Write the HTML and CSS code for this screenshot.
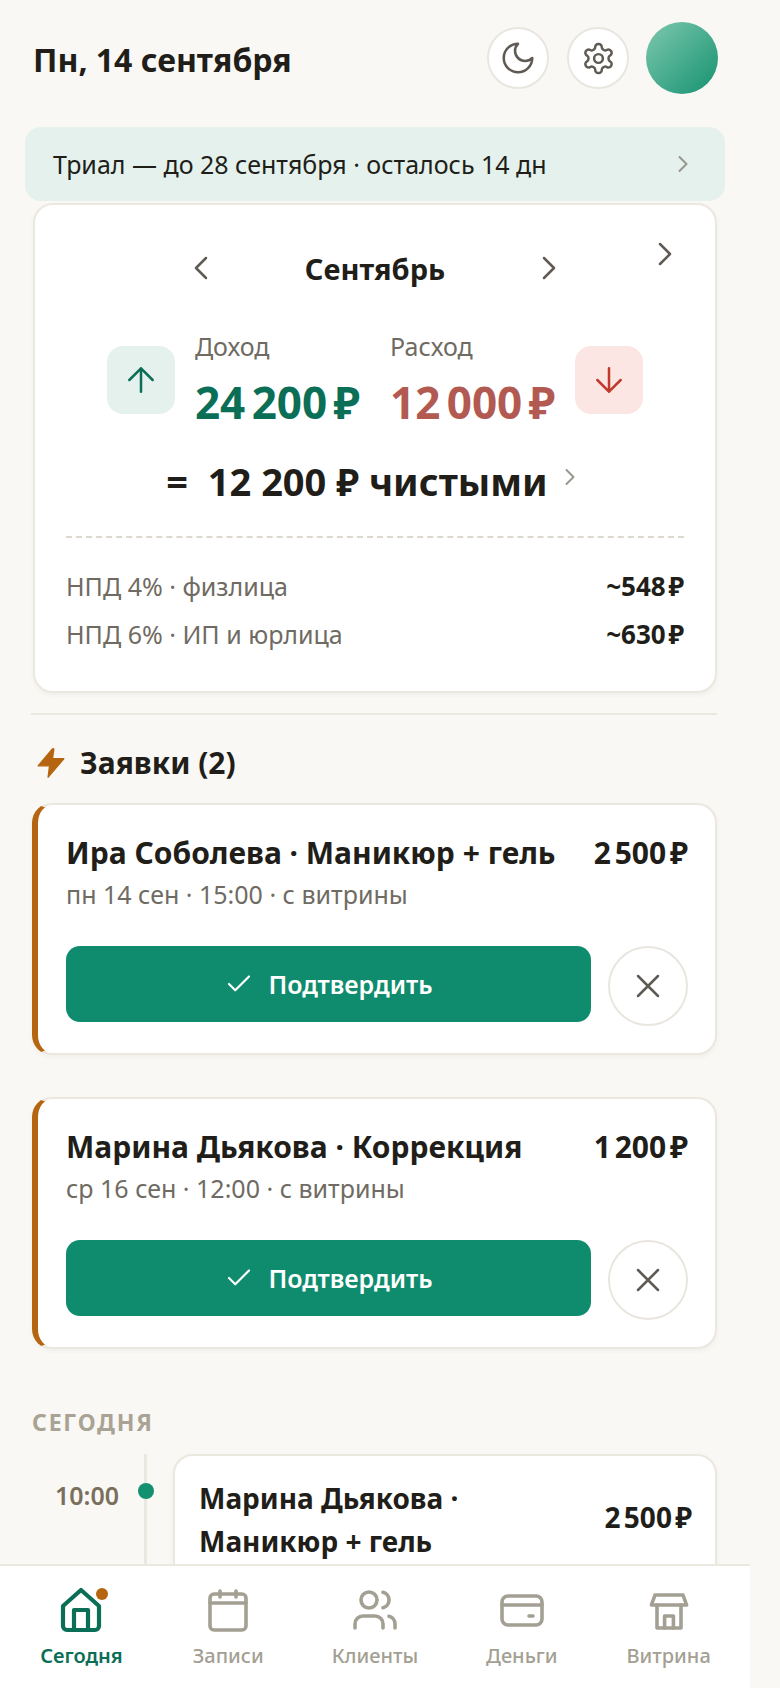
FILE: index.html
```html
<!DOCTYPE html>
<html lang="ru">
<head>
<meta charset="utf-8">
<title>Сегодня</title>
<link rel="stylesheet" href="styles.css">
</head>
<body>
<div class="app">
  <main class="main">
    <header class="top">
      <h1 class="date">Пн, 14 сентября</h1>
      <div class="top-actions">
        <button class="round">
          <svg class="ic-moon" viewBox="0 0 24 24"><path d="M12 3a6 6 0 0 0 9 9 9 9 0 1 1-9-9Z"/></svg>
        </button>
        <button class="round">
          <svg class="ic-gear" viewBox="0 0 24 24"><path d="M12.22 2h-.44a2 2 0 0 0-2 2v.18a2 2 0 0 1-1 1.73l-.43.25a2 2 0 0 1-2 0l-.15-.08a2 2 0 0 0-2.73.73l-.22.38a2 2 0 0 0 .73 2.73l.15.1a2 2 0 0 1 1 1.72v.51a2 2 0 0 1-1 1.74l-.15.09a2 2 0 0 0-.73 2.73l.22.38a2 2 0 0 0 2.73.73l.15-.08a2 2 0 0 1 2 0l.43.25a2 2 0 0 1 1 1.73V20a2 2 0 0 0 2 2h.44a2 2 0 0 0 2-2v-.18a2 2 0 0 1 1-1.73l.43-.25a2 2 0 0 1 2 0l.15.08a2 2 0 0 0 2.73-.73l.22-.39a2 2 0 0 0-.73-2.73l-.15-.08a2 2 0 0 1-1-1.74v-.5a2 2 0 0 1 1-1.74l.15-.09a2 2 0 0 0 .73-2.73l-.22-.38a2 2 0 0 0-2.73-.73l-.15.08a2 2 0 0 1-2 0l-.43-.25a2 2 0 0 1-1-1.73V4a2 2 0 0 0-2-2Z"/><circle cx="12" cy="12" r="3"/></svg>
        </button>
        <div class="avatar"></div>
      </div>
    </header>

    <div class="trial">
      <span>Триал — до 28 сентября · осталось 14 дн</span>
      <svg class="chev-s" viewBox="0 0 24 24"><path d="m9 18 6-6-6-6"/></svg>
    </div>

    <section class="summary card">
      <svg class="chev corner" viewBox="0 0 24 24"><path d="m9 18 6-6-6-6"/></svg>
      <div class="month">
        <svg class="chev" viewBox="0 0 24 24"><path d="m15 18-6-6 6-6"/></svg>
        <span class="month-name">Сентябрь</span>
        <svg class="chev" viewBox="0 0 24 24"><path d="m9 18 6-6-6-6"/></svg>
      </div>
      <div class="flow">
        <div class="tile tile-in"><svg viewBox="0 0 24 24"><path d="m5 12 7-7 7 7M12 19V5"/></svg></div>
        <div class="stat">
          <div class="stat-label">Доход</div>
          <div class="stat-val in">24 200 ₽</div>
        </div>
        <div class="stat">
          <div class="stat-label">Расход</div>
          <div class="stat-val out">12 000 ₽</div>
        </div>
        <div class="tile tile-out"><svg viewBox="0 0 24 24"><path d="M12 5v14M19 12l-7 7-7-7"/></svg></div>
      </div>
      <div class="net">
        <span>=&nbsp; 12 200 ₽ чистыми</span>
        <svg class="chev-s" viewBox="0 0 24 24"><path d="m9 18 6-6-6-6"/></svg>
      </div>
      <div class="taxes">
        <div class="tax"><span>НПД 4% · физлица</span><b>~548 ₽</b></div>
        <div class="tax"><span>НПД 6% · ИП и юрлица</span><b>~630 ₽</b></div>
      </div>
    </section>

    <hr class="rule">

    <div class="req-head">
      <svg class="bolt" viewBox="0 0 24 24"><path d="M13 2 3 14h8l-1 8 11-13h-8l1-7Z"/></svg>
      <span>Заявки (2)</span>
    </div>

    <article class="req card">
      <div class="req-top"><span class="req-name">Ира Соболева · Маникюр + гель</span><span class="req-price">2 500 ₽</span></div>
      <div class="req-sub">пн 14 сен · 15:00 · с витрины</div>
      <div class="req-actions">
        <button class="confirm"><svg viewBox="0 0 24 24"><path d="M20 6 9 17l-5-5"/></svg>Подтвердить</button>
        <button class="reject"><svg viewBox="0 0 24 24"><path d="M18 6 6 18M6 6l12 12"/></svg></button>
      </div>
    </article>

    <article class="req card">
      <div class="req-top"><span class="req-name">Марина Дьякова · Коррекция</span><span class="req-price">1 200 ₽</span></div>
      <div class="req-sub">ср 16 сен · 12:00 · с витрины</div>
      <div class="req-actions">
        <button class="confirm"><svg viewBox="0 0 24 24"><path d="M20 6 9 17l-5-5"/></svg>Подтвердить</button>
        <button class="reject"><svg viewBox="0 0 24 24"><path d="M18 6 6 18M6 6l12 12"/></svg></button>
      </div>
    </article>

    <h2 class="section">СЕГОДНЯ</h2>

    <div class="timeline">
      <div class="time">10:00</div>
      <div class="rail"><span class="dot"></span></div>
      <article class="appt card">
        <div class="appt-name">Марина Дьякова · Маникюр + гель</div>
        <div class="appt-price">2 500 ₽</div>
      </article>
    </div>
  </main>

  <nav class="tabs">
    <div class="tab active">
      <span class="tab-ic">
        <svg viewBox="0 0 24 24"><path d="M3 10 12 2l9 8v10a2 2 0 0 1-2 2H5a2 2 0 0 1-2-2Z"/><path d="M8.5 22V12h7v10"/></svg>
        <span class="badge"></span>
      </span>
      <span>Сегодня</span>
    </div>
    <div class="tab">
      <span class="tab-ic"><svg viewBox="0 0 24 24"><path d="M8 2.5v3M16 2.5v3"/><rect x="3" y="4" width="18" height="18" rx="2"/><path d="M3 8.5h18"/></svg></span>
      <span>Записи</span>
    </div>
    <div class="tab">
      <span class="tab-ic"><svg viewBox="0 0 24 24"><path d="M16 21v-2a4 4 0 0 0-4-4H6a4 4 0 0 0-4 4v2"/><circle cx="9" cy="7" r="4"/><path d="M22 21v-2a4 4 0 0 0-3-3.87M16 3.13a4 4 0 0 1 0 7.75"/></svg></span>
      <span>Клиенты</span>
    </div>
    <div class="tab">
      <span class="tab-ic"><svg viewBox="0 0 24 24"><rect x="2" y="5" width="20" height="14.5" rx="3"/><path d="M2 9.5h20M15.5 15h2"/></svg></span>
      <span>Деньги</span>
    </div>
    <div class="tab">
      <span class="tab-ic"><svg viewBox="0 0 24 24"><path d="M5 4.5h14l1.8 5H3.2Z"/><path d="M6 9.5V21h12V9.5"/><path d="M9.8 21v-6h4.4v6"/></svg></span>
      <span>Витрина</span>
    </div>
  </nav>
</div>
</body>
</html>
```
FILE: styles.css
```css
* { box-sizing: border-box; }
html, body { margin: 0; height: 100%; }
body {
  background: #faf8f5;
  color: #211e1a;
  font-family: "Noto Sans", "Open Sans", sans-serif;
  overflow: hidden;
}
svg { fill: none; stroke: currentColor; stroke-width: 2; stroke-linecap: round; stroke-linejoin: round; display: block; }
button { font: inherit; cursor: pointer; }

.app { width: 750px; height: 1688px; display: flex; flex-direction: column; }
.main { flex: 1; min-height: 0; overflow: hidden; padding: 22px 33px 0; }

.top { height: 72px; display: flex; align-items: center; justify-content: space-between; margin-right: -1px; }
.date { margin: 4px 0 0; font-size: 32px; font-weight: 700; line-height: 42px; }
.top-actions { display: flex; align-items: center; gap: 18px; }
.round {
  width: 62px; height: 62px; border-radius: 50%; padding: 0;
  background: #fff; border: 2px solid #e9e6e0; color: #5f5b54;
  display: flex; align-items: center; justify-content: center;
}
.ic-moon { width: 38px; height: 38px; stroke-width: 1.6; }
.ic-gear { width: 35px; height: 35px; stroke-width: 1.7; }
.avatar { width: 72px; height: 72px; border-radius: 50%; background: linear-gradient(135deg, #7ec8ae, #159270); margin-left: -1px; }

.trial {
  margin: 33px -8px 2px; height: 74px; padding: 0 28px 0 28px;
  background: #e4f1ec; border-radius: 16px;
  display: flex; align-items: center; justify-content: space-between;
  font-size: 25px; line-height: 32px;
}
.chev-s { width: 28px; height: 28px; color: #98968e; stroke-width: 1.7; }

.card { background: #fff; border: 2px solid #ebe8df; border-radius: 20px; box-shadow: 0 2px 4px rgba(60,50,30,.05); }

.summary { position: relative; height: 490px; padding: 0 31px; }
.corner { position: absolute; top: 29px; right: 30px; }
.chev { width: 40px; height: 40px; color: #5f5b54; stroke-width: 1.5; flex: none; }
.month { height: 48px; margin-top: 39px; display: flex; align-items: center; justify-content: center; gap: 65px; }
.month-name { font-size: 29px; font-weight: 700; width: 178px; text-align: center; }

.flow { margin-top: 44px; display: flex; align-items: flex-start; justify-content: center; gap: 30px; }
.tile { width: 68px; height: 68px; border-radius: 16px; flex: none; margin-top: 10px; display: flex; align-items: center; justify-content: center; }
.tile svg { width: 40px; height: 40px; stroke-width: 1.5; }
.tile-in { background: #e4f1ec; color: #0b6e56; margin-right: -10px; }
.tile-out { background: #fbe6e3; color: #c0392b; margin-left: -10px; }
.stat-label { font-size: 25px; line-height: 32px; color: #6f6b63; margin-top: -6px; }
.stat-val { font-size: 44px; font-weight: 700; line-height: 54px; margin-top: 13px; white-space: nowrap; word-spacing: -5px; }
.in { color: #0b6e56; }
.out { color: #b25a52; }

.net { display: flex; align-items: flex-start; justify-content: center; gap: 8px; margin-top: 26px; font-size: 38px; font-weight: 700; line-height: 52px; padding-bottom: 29px; }
.net .chev-s { margin-top: 8px; }

.taxes { border-top: 2px dashed #dcd8cd; padding-top: 24px; }
.tax { display: flex; justify-content: space-between; font-size: 25px; line-height: 48px; color: #6f6b63; }
.tax b { color: #211e1a; font-weight: 700; font-size: 26px; word-spacing: -4px; }

.rule { margin: 20px 0 0 -2px; border: 0; height: 2px; background: #ebe8df; }

.req-head { margin: 28px 0 0 1px; display: flex; align-items: center; gap: 12px; font-size: 30px; font-weight: 700; line-height: 40px; }
.bolt { width: 34px; height: 34px; fill: #b5650f; stroke: #b5650f; stroke-width: 1; }

.req { margin: 20px 0 42px -1px; height: 252px; border-left: 6px solid #b5650f; padding: 28px 27px 0 28px; }
.req-top { display: flex; justify-content: space-between; font-size: 30px; font-weight: 700; line-height: 40px; }
.req-price { word-spacing: -4px; }
.req-sub { font-size: 25px; line-height: 32px; color: #6f6b63; margin-top: 5px; }
.req-actions { margin-top: 36px; display: flex; gap: 17px; align-items: flex-start; }
.confirm {
  flex: 1; height: 76px; border: 0; border-radius: 14px; background: #0e8c6d; color: #fff;
  display: flex; align-items: center; justify-content: center; gap: 14px;
  font-size: 25px; font-weight: 600;
}
.confirm svg { width: 30px; height: 30px; stroke-width: 1.7; }
.reject {
  width: 80px; height: 80px; flex: none; padding: 0; border-radius: 50%;
  background: #fff; border: 2px solid #e9e6e0; color: #5f5b54;
  display: flex; align-items: center; justify-content: center;
}
.reject svg { width: 40px; height: 40px; stroke-width: 1.5; }

.section { margin: 58px 0 0 -1px; font-size: 23px; font-weight: 700; line-height: 30px; letter-spacing: 1.8px; color: #a8a394; }

.timeline { margin-top: 17px; display: flex; height: 300px; }
.time { width: 86px; font-size: 25px; font-weight: 600; color: #7a6f5d; line-height: 34px; margin-top: 24px; text-align: right; }
.rail { position: relative; width: 54px; }
.rail::before { content: ""; position: absolute; left: 25px; top: 0; bottom: 0; width: 3px; background: #ebe8df; }
.dot { position: absolute; left: 19px; top: 29px; width: 16px; height: 16px; border-radius: 50%; background: #12906f; }
.appt { flex: 1; height: 300px; padding: 21px 23px 0 24px; display: flex; justify-content: space-between; }
.appt-name { width: 320px; font-size: 28px; font-weight: 700; line-height: 43px; }
.appt-price { font-size: 28px; font-weight: 700; line-height: 43px; margin-top: 19px; word-spacing: -4px; }

.tabs {
  height: 124px; flex: none; background: #fff; border-top: 2px solid #ebe8df;
  display: grid; grid-template-columns: repeat(5, 1fr); padding: 0 8px;
}
.tab { display: flex; flex-direction: column; align-items: center; padding-top: 20px; color: #a3a093; font-size: 20px; font-weight: 500; line-height: 28px; gap: 8px; }
.tab.active { color: #0b6e56; font-weight: 600; }
.tab-ic { position: relative; width: 48px; height: 48px; display: block; }
.tab-ic svg { width: 48px; height: 48px; stroke-width: 1.8; }
.active .tab-ic svg { stroke-width: 2.1; }
.badge { position: absolute; top: 2px; right: -3px; width: 12px; height: 12px; border-radius: 50%; background: #b5650f; }
```
